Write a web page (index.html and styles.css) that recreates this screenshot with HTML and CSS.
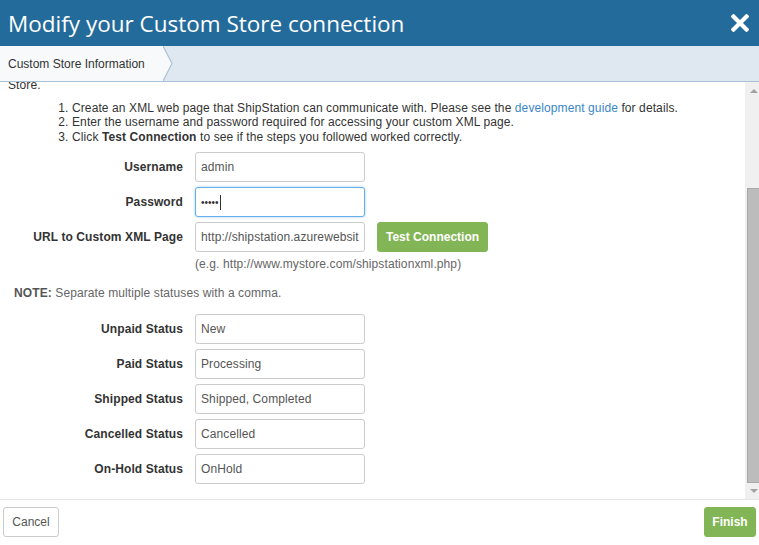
FILE: index.html
```html
<!DOCTYPE html>
<html lang="en">
<head>
<meta charset="utf-8">
<title>Modify your Custom Store connection</title>
<link rel="stylesheet" href="styles.css">
</head>
<body>
<div class="modal">
  <header class="modal-header">
    <h1 class="modal-title">Modify your Custom Store connection</h1>
    <button class="close" aria-label="Close">
      <svg width="18" height="18" viewBox="0 0 18 18"><path d="M2.5 2.5 L15.5 15.5 M15.5 2.5 L2.5 15.5" stroke="#fff" stroke-width="4.2" stroke-linecap="square"/></svg>
    </button>
  </header>
  <nav class="steps">
    <div class="step active">
      <span class="step-label">Custom Store Information</span>
      <svg class="chevron" width="10" height="35" viewBox="0 0 10 35"><polygon points="0,0 9,17.5 0,35" fill="#f7f9fb"/><polyline points="0,0 9,17.5 0,35" fill="none" stroke="#a9c1d6" stroke-width="1.2"/></svg>
    </div>
  </nav>
  <div class="body">
    <div class="viewport">
      <div class="content">
        <p class="intro">Follow the steps below to connect ShipStation to your Custom<br>Store.</p>
        <ol class="steps-list">
          <li>Create an XML web page that ShipStation can communicate with. Please see the <a href="#">development guide</a> for details.</li>
          <li>Enter the username and password required for accessing your custom XML page.</li>
          <li>Click <b>Test Connection</b> to see if the steps you followed worked correctly.</li>
        </ol>
        <div class="form-grid">
          <label class="label">Username</label>
          <input class="input" type="text" value="admin">
          <span></span>
          <label class="label">Password</label>
          <div class="input focused"><span class="dots">•••••</span><span class="caret"></span></div>
          <span></span>
          <label class="label">URL to Custom XML Page</label>
          <input class="input" type="text" value="http://shipstation.azurewebsites.net/api/xml">
          <button class="btn btn-green btn-test">Test Connection</button>
          <span></span>
          <span class="hint">(e.g. http://www.mystore.com/shipstationxml.php)</span>
          <span></span>
        </div>
        <p class="note"><b>NOTE:</b> Separate multiple statuses with a comma.</p>
        <div class="form-grid status-grid">
          <label class="label">Unpaid Status</label>
          <input class="input" type="text" value="New">
          <label class="label">Paid Status</label>
          <input class="input" type="text" value="Processing">
          <label class="label">Shipped Status</label>
          <input class="input" type="text" value="Shipped, Completed">
          <label class="label">Cancelled Status</label>
          <input class="input" type="text" value="Cancelled">
          <label class="label">On-Hold Status</label>
          <input class="input" type="text" value="OnHold">
        </div>
      </div>
    </div>
    <div class="scrollbar">
      <div class="sb-btn"><span class="tri up"></span></div>
      <div class="sb-track"><div class="sb-thumb"></div></div>
      <div class="sb-btn"><span class="tri down"></span></div>
    </div>
  </div>
  <footer class="modal-footer">
    <button class="btn btn-default">Cancel</button>
    <button class="btn btn-green btn-finish">Finish</button>
  </footer>
</div>
</body>
</html>
```

FILE: styles.css
```css
* { box-sizing: border-box; }
html, body { margin: 0; padding: 0; }
body {
  font-family: "Liberation Sans", Arial, sans-serif;
  font-size: 12px;
  letter-spacing: 0.1px;
  color: #333;
  background: #fff;
}
.modal {
  width: 759px;
  height: 545px;
  display: flex;
  flex-direction: column;
  overflow: hidden;
}
.modal-header {
  height: 46px;
  background: #236b9a;
  display: flex;
  align-items: center;
  justify-content: space-between;
  padding: 0 10px 0 8px;
  flex: none;
}
.modal-title {
  margin: 0;
  font-family: "Open Sans", sans-serif;
  font-weight: 400;
  font-size: 22.5px;
  color: #fff;
  letter-spacing: 0;
}
.close {
  border: 0;
  background: none;
  padding: 0;
  width: 18px;
  height: 18px;
  display: flex;
}
.steps {
  height: 36px;
  background: #dfe8f1;
  border-bottom: 1px solid #a9c1d6;
  display: flex;
  flex: none;
}
.step {
  display: flex;
  align-items: stretch;
  height: 35px;
}
.step-label {
  background: #f7f9fb;
  padding: 0 0 0 8px;
  display: flex;
  align-items: center;
  color: #333;
  width: 163px;
  letter-spacing: 0;
}
.chevron { display: block; }
.body {
  flex: 1;
  display: flex;
  min-height: 0;
}
.viewport {
  flex: 1;
  overflow: hidden;
  display: flex;
  flex-direction: column;
  justify-content: flex-end;
}
.content {
  padding: 0 8px 15px 8px;
}
.intro {
  margin: 0 0 8px 0;
  line-height: 14.4px;
}
.steps-list {
  margin: 0 0 8px 0;
  padding-left: 64px;
  line-height: 14.4px;
}
.steps-list a { color: #3a87c8; text-decoration: none; }
.form-grid {
  display: grid;
  grid-template-columns: 175px 170px auto;
  column-gap: 12px;
  row-gap: 5px;
  align-items: center;
  justify-content: start;
}
.status-grid { grid-template-columns: 175px 170px; }
.label {
  text-align: right;
  font-weight: bold;
  color: #333;
}
.input {
  height: 30px;
  width: 170px;
  border: 1px solid #ccc;
  border-radius: 3px;
  padding: 0 5px;
  font-family: "Liberation Sans", Arial, sans-serif;
  font-size: 12px;
  letter-spacing: 0.1px;
  color: #555;
  background: #fff;
  outline: none;
  margin: 0;
}
div.input {
  display: flex;
  align-items: center;
}
.input.focused {
  border-color: #66afe9;
  box-shadow: 0 0 3px rgba(102, 175, 233, 0.6);
}
.dots { font-size: 10px; letter-spacing: 0; color: #333; }
.caret {
  width: 1px;
  height: 15px;
  background: #333;
  margin-left: 1px;
}
.hint {
  color: #666;
  line-height: 15px;
  white-space: nowrap;
}
.note {
  margin: 13px 0 12px 6px;
  line-height: 17px;
  color: #666;
}
.note b { color: #555; }
.btn {
  height: 30px;
  border-radius: 3px;
  font-family: "Liberation Sans", Arial, sans-serif;
  font-size: 12px;
  padding: 0;
  cursor: pointer;
  white-space: nowrap;
}
.btn-green {
  background: #82b555;
  border: 1px solid #82b555;
  color: #fff;
  font-weight: bold;
  letter-spacing: 0;
}
.btn-test {
  justify-self: start;
  width: 111px;
}
.btn-finish { width: 52px; }
.btn-default {
  background: #fff;
  border: 1px solid #ccc;
  color: #555;
  width: 56px;
}
.scrollbar {
  width: 14px;
  background: #f0f0f0;
  display: flex;
  flex-direction: column;
  flex: none;
}
.sb-btn {
  height: 17px;
  display: flex;
  align-items: center;
  justify-content: center;
  padding-left: 3px;
  flex: none;
}
.sb-btn:last-child { height: 16px; }
.tri {
  width: 0;
  height: 0;
  border-left: 4px solid transparent;
  border-right: 4px solid transparent;
}
.tri.up { border-bottom: 4px solid #a3a3a3; }
.tri.down { border-top: 4px solid #a3a3a3; }
.sb-track {
  flex: 1;
  display: flex;
  flex-direction: column;
  justify-content: flex-end;
  padding-left: 2px;
}
.sb-thumb {
  height: 295px;
  background: #bcbcbc;
  border: 1px solid #a8a8a8;
  border-right: 0;
}
.modal-footer {
  flex: none;
  border-top: 1px solid #e5e5e5;
  display: flex;
  justify-content: space-between;
  padding: 7px 3px 8px 3px;
}
```
